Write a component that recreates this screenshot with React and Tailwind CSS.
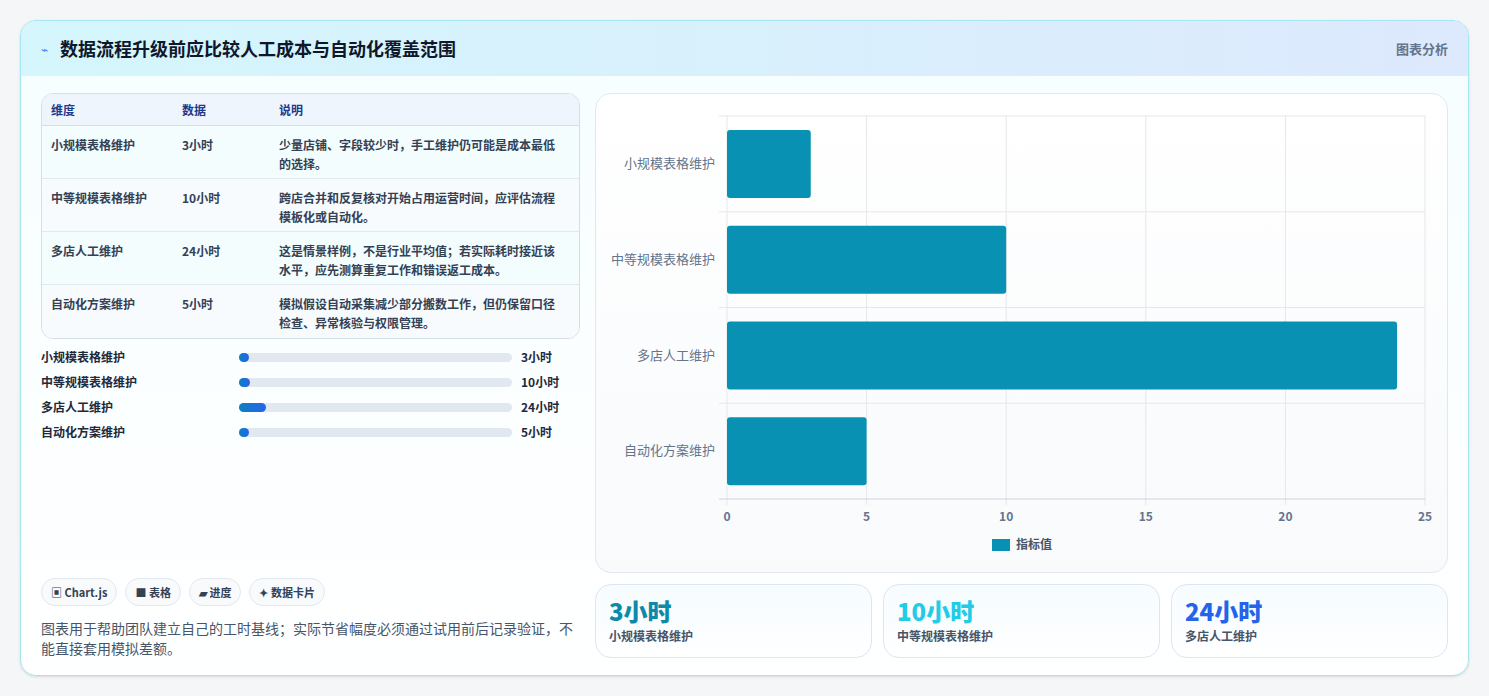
import React from "react";

const rows = [
  ["小规模表格维护", "3小时", "少量店铺、字段较少时，手工维护仍可能是成本最低的选择。"],
  ["中等规模表格维护", "10小时", "跨店合并和反复核对开始占用运营时间，应评估流程模板化或自动化。"],
  ["多店人工维护", "24小时", "这是情景样例，不是行业平均值；若实际耗时接近该水平，应先测算重复工作和错误返工成本。"],
  ["自动化方案维护", "5小时", "模拟假设自动采集减少部分搬数工作，但仍保留口径检查、异常核验与权限管理。"],
];
const vals = [3, 10, 24, 5];

function Chart() {
  const x0 = 131, w = 698, y0 = 22, band = 95.75;
  const sx = (v) => x0 + (v / 25) * w;
  return (
    <svg width="851" height="479" className="block">
      {[0, 5, 10, 15, 20, 25].map((t) => (
        <g key={t}>
          <line x1={sx(t)} x2={sx(t)} y1={y0} y2={y0 + 383 + 6} stroke="#e5e7eb" />
          <text x={sx(t)} y={427} textAnchor="middle" fontSize="12" fill="#64748b" fontWeight="600">{t}</text>
        </g>
      ))}
      {[0, 1, 2, 3, 4].map((i) => (
        <line key={i} x1={x0 - 8} x2={x0 + w} y1={y0 + i * band} y2={y0 + i * band} stroke={i === 4 ? "#cbd5e1" : "#e5e7eb"} />
      ))}
      {rows.map((r, i) => (
        <g key={i}>
          <rect x={x0} y={y0 + i * band + 14} width={sx(vals[i]) - x0} height={68} rx="3" fill="#0891b2" />
          <text x={119} y={y0 + i * band + 52} textAnchor="end" fontSize="13" fill="#64748b">{r[0]}</text>
        </g>
      ))}
      <rect x="396" y="445" width="18" height="12" fill="#0891b2" />
      <text x="420" y="455" fontSize="12" fill="#475569" fontWeight="600">指标值</text>
    </svg>
  );
}

export default function App() {
  return (
    <div className="min-h-[696px] bg-[#f4f6f8] p-5 pt-5" style={{ fontFamily: '"Noto Sans CJK SC", "Noto Sans", sans-serif' }}>
      <div className="rounded-2xl border border-[#a5e6ef] bg-gradient-to-b from-[#f6feff] to-white overflow-hidden h-[656px] flex flex-col shadow-sm">
        <div className="h-[55px] flex items-center justify-between px-5 bg-gradient-to-r from-[#d4f6fc] to-[#dde9fd] shrink-0">
          <div className="flex items-center gap-3">
            <span className="text-[#3b82f6] text-xs">⌁</span>
            <span className="text-[18px] font-bold text-[#0f172a]">数据流程升级前应比较人工成本与自动化覆盖范围</span>
          </div>
          <span className="text-[13px] font-semibold text-[#64748b]">图表分析</span>
        </div>
        <div className="flex gap-[15px] px-5 pt-[17px] pb-5 flex-1">
          <div className="w-[543px] flex flex-col">
            <div className="rounded-xl border border-[#d5dfea] overflow-hidden text-[12px]">
              <div className="grid grid-cols-[131px_97px_1fr] h-[32px] items-center px-[9px] bg-[#eef5fd] border-b border-[#d5dfea] font-semibold text-[#1e3a8a]">
                <span>维度</span><span>数据</span><span>说明</span>
              </div>
              {rows.map((r, i) => (
                <div key={i} className={`grid grid-cols-[131px_97px_1fr] px-[9px] pt-[9px] h-[53px] ${i < 3 ? "border-b border-[#e2e8f0]" : ""} ${i % 2 ? "bg-[#f8fbfd]" : "bg-[#f3fdfe]"} font-semibold text-[#334155] leading-[19px]`}>
                  <span>{r[0]}</span><span>{r[1]}</span><span className="pr-2">{r[2]}</span>
                </div>
              ))}
            </div>
            <div className="mt-[9px] flex flex-col gap-[7px]">
              {rows.map((r, i) => (
                <div key={i} className="flex items-center h-[18px] text-[12px] font-semibold text-[#1e293b]">
                  <span className="w-[198px]">{r[0]}</span>
                  <div className="w-[273px] h-[9px] rounded-full bg-[#e2e8f0]">
                    <div className="h-full rounded-full bg-gradient-to-r from-[#0e7fc0] to-[#2563eb]" style={{ width: Math.max(10, (vals[i] / 240) * 273) + "px" }} />
                  </div>
                  <span className="ml-[9px] font-bold">{r[1]}</span>
                </div>
              ))}
            </div>
            <div className="mt-auto">
              <div className="flex gap-2 text-[11px] font-semibold text-[#334155]">
                {["▣ Chart.js", "■ 表格", "▰ 进度", "✦ 数据卡片"].map((c) => (
                  <span key={c} className="h-[28px] px-[9px] flex items-center rounded-full border border-[#e2e8f0] bg-[#f8fafc]">{c}</span>
                ))}
              </div>
              <p className="mt-[12px] text-[14px] leading-[20px] text-[#475569]">图表用于帮助团队建立自己的工时基线；实际节省幅度必须通过试用前后记录验证，不能直接套用模拟差额。</p>
            </div>
          </div>
          <div className="flex-1 flex flex-col gap-[11px]">
            <div className="h-[480px] rounded-2xl border border-[#e2e8f0] bg-gradient-to-b from-white to-[#f8fafc] overflow-hidden">
              <Chart />
            </div>
            <div className="grid grid-cols-3 gap-[11px]">
              {[["3小时", "text-[#0e8aa8]", 0], ["10小时", "text-[#22cce6]", 1], ["24小时", "text-[#2563eb]", 2]].map(([v, c, i]) => (
                <div key={v} className="h-[74px] rounded-2xl border border-[#dbe7f3] bg-gradient-to-b from-[#f6fcff] to-white px-[13px] pt-[10px]">
                  <div className={`text-[24px] font-extrabold leading-[32px] ${c}`}>{v}</div>
                  <div className="text-[12px] font-semibold text-[#475569]">{rows[i][0]}</div>
                </div>
              ))}
            </div>
          </div>
        </div>
      </div>
    </div>
  );
}
